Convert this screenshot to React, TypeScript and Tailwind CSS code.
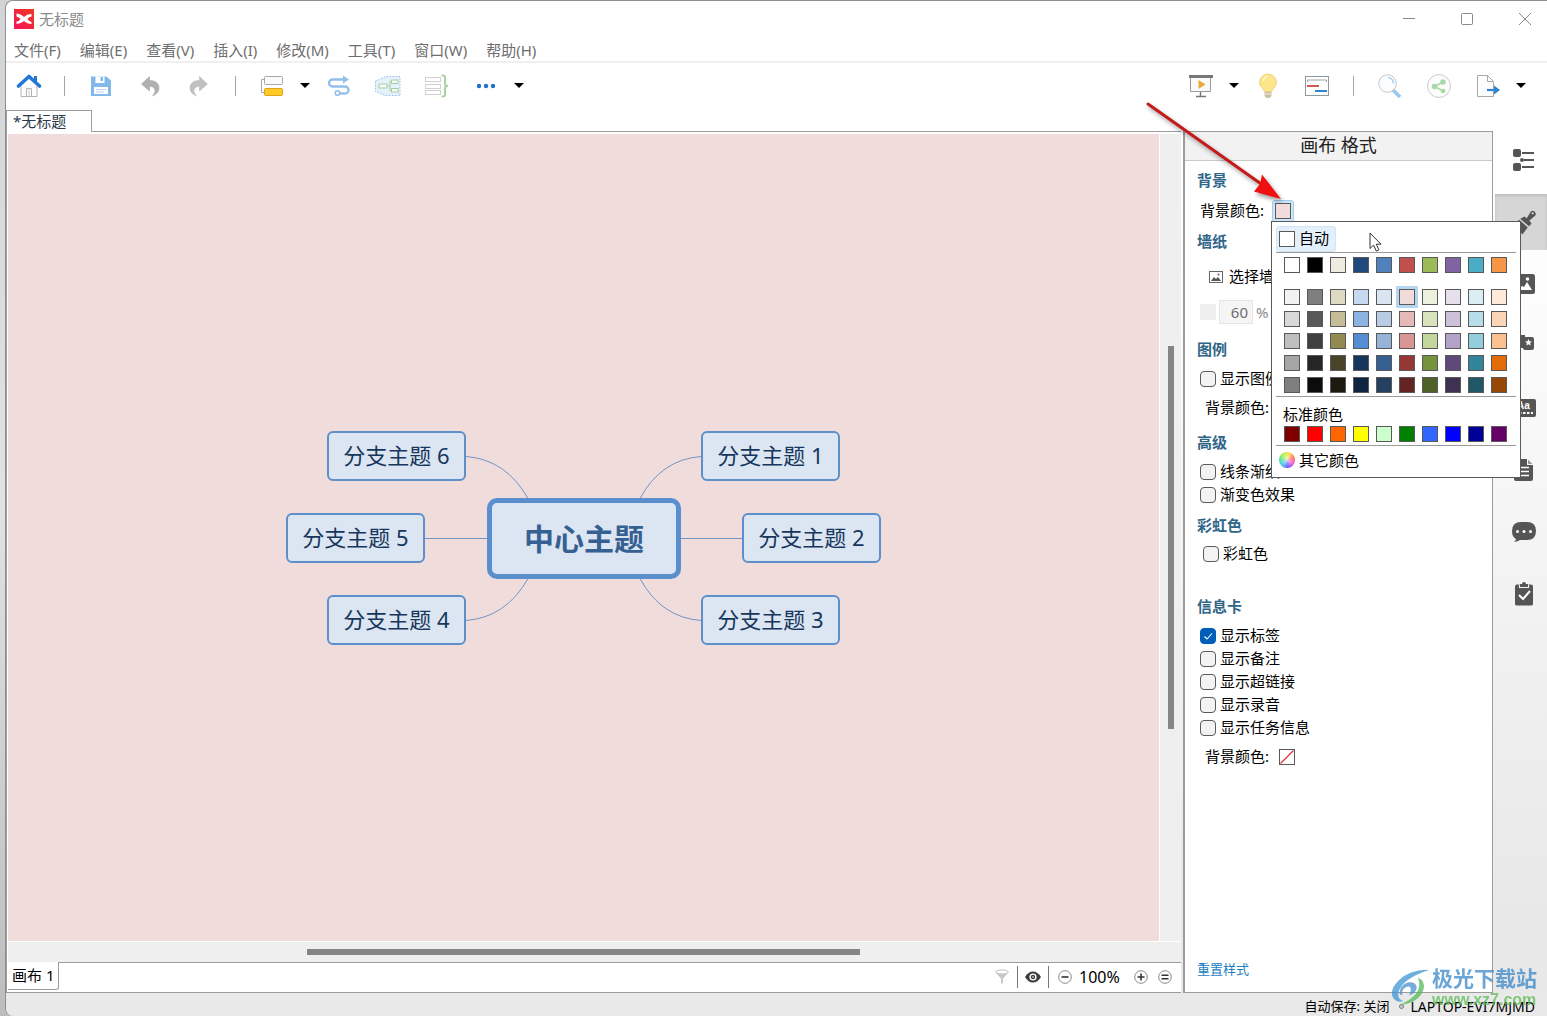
import React, { useState } from 'react';

const FONT = "font-['Noto_Sans','Noto_Sans_CJK_SC',sans-serif]";

const MENUS = ['文件(F)', '编辑(E)', '查看(V)', '插入(I)', '修改(M)', '工具(T)', '窗口(W)', '帮助(H)'];

const BASE_COLORS = ['#ffffff', '#000000', '#eeece1', '#1f497d', '#4f81bd', '#c0504d', '#9bbb59', '#8064a2', '#4bacc6', '#f79646'];

const THEME_COLORS = [
  '#f2f2f2', '#7f7f7f', '#ddd9c3', '#c6d9f0', '#dbe5f1', '#f2dcdb', '#ebf1dd', '#e5e0ec', '#dbeef3', '#fdeada',
  '#d8d8d8', '#595959', '#c4bd97', '#8db3e2', '#b8cce4', '#e5b9b7', '#d7e3bc', '#ccc1d9', '#b7dde8', '#fbd5b5',
  '#bfbfbf', '#3f3f3f', '#938953', '#548dd4', '#95b3d7', '#d99694', '#c3d69b', '#b2a2c7', '#92cddc', '#fac08f',
  '#a5a5a5', '#262626', '#494429', '#17365d', '#366092', '#953734', '#76923c', '#5f497a', '#31859b', '#e36c09',
  '#7f7f7f', '#0c0c0c', '#1d1b10', '#0f243e', '#244061', '#632423', '#4f6128', '#3f3151', '#205867', '#974806',
];

const STANDARD_COLORS = ['#800000', '#ff0000', '#ff6600', '#ffff00', '#ccffcc', '#008000', '#3366ff', '#0000ff', '#000099', '#660066'];

const BRANCHES = [
  { name: '分支主题 6', place: 'left-[41px] top-0' },
  { name: '分支主题 5', place: 'left-0 top-[82px]' },
  { name: '分支主题 4', place: 'left-[41px] top-[164px]' },
  { name: '分支主题 1', place: 'left-[415px] top-0' },
  { name: '分支主题 2', place: 'left-[456px] top-[82px]' },
  { name: '分支主题 3', place: 'left-[415px] top-[164px]' },
];

/* Toolbar icons */
function HomeIcon() {
  return (
    <svg width="26" height="24" viewBox="0 0 26 24" fill="none">
      <path d="M5 12v10.500h16V12" fill="#fdfdfd" stroke="#b4b4b4" />
      <path d="M10.500 22.500v-8h5v8" stroke="#b4b4b4" />
      <path d="M13 14.500v8" stroke="#d0d0d0" />
      <path d="M18 2h3v6h-3z" fill="#2377d4" />
      <path d="M2.500 12 13 2.500 23.500 12" stroke="#2377d4" strokeWidth="3.600" strokeLinecap="round" strokeLinejoin="round" />
    </svg>
  );
}

function SaveIcon() {
  return (
    <svg width="22" height="22" viewBox="0 0 22 22">
      <path d="M1 1.500h15.500l4.500 4V21H1z" fill="#83b9ea" />
      <path d="M5.500 1.500h9V8h-9z" fill="#fff" />
      <path d="M10.500 2h2.500v4h-2.500z" fill="#83b9ea" />
      <path d="M4 12h14v7H4z" fill="#fff" />
      <path d="M6 14.500h10M6 17h8" stroke="#b9d3ea" />
    </svg>
  );
}

function UndoIcon({ flip }: { flip?: boolean }) {
  return (
    <svg width="20" height="22" viewBox="0 0 20 22" className={flip ? '-scale-x-100' : ''}>
      <path
        d="M9.500 1.500 1.500 9l8 7v-4.500c4 0 5.500 2 5.500 4.500 0 1.500-1 3-2.500 5 4-1.500 6.500-4.500 6.500-8 0-5-3.500-7.500-9.500-7.500z"
        fill={flip ? '#c0c0c0' : '#b0b0b0'}
        stroke={flip ? '#b5b5b5' : '#a0a0a0'}
        strokeWidth="0.500"
      />
    </svg>
  );
}

function TopicIcon() {
  return (
    <svg width="24" height="22" viewBox="0 0 24 22" fill="none">
      <path d="M4 4.500H1.500v13H4" stroke="#a8a8a8" />
      <rect x="4.500" y="1.500" width="18" height="8" rx="1" fill="#fafafa" stroke="#a8a8a8" />
      <rect x="4.500" y="13.500" width="18" height="7" rx="1" fill="#ffc928" stroke="#dba51c" />
    </svg>
  );
}

function RelationIcon() {
  return (
    <svg width="24" height="22" viewBox="0 0 24 22" fill="none">
      <path
        d="M17 4.500H5.500a3.500 3.500 0 0 0 0 7h12.500a3.500 3.500 0 0 1 0 7H13"
        stroke="#93c0ea"
        strokeWidth="2.400"
        strokeLinecap="round"
      />
      <path d="M16 0.500 22 4.500 16 8.500z" fill="#93c0ea" />
      <circle cx="10.500" cy="18" r="2.300" stroke="#93c0ea" strokeWidth="1.600" />
    </svg>
  );
}

function BoundaryIcon() {
  return (
    <svg width="26" height="22" viewBox="0 0 26 22" fill="none">
      <path d="M.500 6 11 1.500h14v19H10L.500 16.500z" fill="#e6f2fb" stroke="#8fbfe8" strokeDasharray="1.500 1.500" />
      <path d="M12 11h3M15 6v10M15 6.500h2M15 15.500h2" stroke="#a5cfa0" />
      <rect x="4" y="9" width="8" height="4" fill="#f7fbf7" stroke="#a5cfa0" />
      <rect x="16.500" y="5" width="6.500" height="3.500" fill="#f7fbf7" stroke="#a5cfa0" />
      <rect x="16.500" y="13.500" width="6.500" height="3.500" fill="#f7fbf7" stroke="#a5cfa0" />
    </svg>
  );
}

function SummaryIcon() {
  return (
    <svg width="26" height="24" viewBox="0 0 26 24" fill="none">
      <rect x="1.500" y="3.500" width="15" height="4" stroke="#d0d0d0" />
      <rect x="1.500" y="10.500" width="15" height="4" stroke="#d0d0d0" />
      <rect x="1.500" y="16.500" width="15" height="4" stroke="#d0d0d0" />
      <path d="M17.500 1.500h1.500q2 0 2 2V10q0 2 3 2-3 0-3 2v6.500q0 2-2 2h-1.500" stroke="#a9d3a0" strokeWidth="2" />
    </svg>
  );
}

function DotsIcon() {
  return (
    <svg width="20" height="6" viewBox="0 0 20 6" fill="#2271c8">
      <circle cx="3" cy="3" r="2.200" />
      <circle cx="10" cy="3" r="2.200" />
      <circle cx="17" cy="3" r="2.200" />
    </svg>
  );
}

function PresentIcon() {
  return (
    <svg width="26" height="24" viewBox="0 0 26 24" fill="none">
      <path d="M2.500 3.500h20v14h-20z" fill="#fafafa" stroke="#9a9a9a" />
      <path d="M1 1h24v3H1z" fill="#777" />
      <path d="M12.500 18v4M8 22.500h10" stroke="#777" strokeWidth="1.400" />
      <path d="M10.500 6 17.500 10.500 10.500 15z" fill="#eca93a" />
    </svg>
  );
}

function BulbIcon() {
  return (
    <svg width="20" height="26" viewBox="0 0 20 26" fill="none">
      <path
        d="M10 1a8.500 8.500 0 0 0-8.500 8.500c0 4 4 5.500 4.700 9h7.600c.700-3.500 4.700-5 4.700-9A8.500 8.500 0 0 0 10 1z"
        fill="#fde58a"
        stroke="#f1d27a"
      />
      <path d="M5 8q1-4 4.500-5" stroke="#fff6d2" strokeWidth="1.500" />
      <path d="M6.500 19h7v4l-2 2h-3l-2-2z" fill="#c9c0a8" />
      <path d="M6.500 21h7" stroke="#f6f1e0" />
    </svg>
  );
}

function GanttIcon() {
  return (
    <svg width="26" height="22" viewBox="0 0 26 22" fill="none">
      <rect x="1.500" y="1.500" width="23" height="19" stroke="#8e9aa3" />
      <path d="M3.500 7V5h19v2" stroke="#a0a0a0" />
      <path d="M3 11h12" stroke="#cc5d50" strokeWidth="2" />
      <path d="M11 16h12" stroke="#2f85cf" strokeWidth="2" />
    </svg>
  );
}

function SearchIcon() {
  return (
    <svg width="26" height="26" viewBox="0 0 26 26" fill="none">
      <path d="m16 17 7 7" stroke="#9cc5ec" strokeWidth="3.600" />
      <circle cx="10.500" cy="10.500" r="8.800" fill="#fcfdfe" stroke="#c2c6ca" />
      <path d="M11 4.500q5 .500 5.500 6" stroke="#a9cff0" strokeWidth="1.500" />
    </svg>
  );
}

function ShareIcon() {
  return (
    <svg width="26" height="26" viewBox="0 0 26 26" fill="none">
      <circle cx="13" cy="13" r="11.500" fill="#fcfcfc" stroke="#cdcdcd" />
      <path d="M17 9 8.500 13.500 17 18" stroke="#a8d8a8" strokeWidth="1.500" />
      <circle cx="17" cy="9" r="2.700" fill="#a8d8a8" />
      <circle cx="8.500" cy="13.500" r="2.700" fill="#a8d8a8" />
      <circle cx="17" cy="18" r="2.300" fill="#a8d8a8" />
    </svg>
  );
}

function ExportIcon() {
  return (
    <svg width="26" height="24" viewBox="0 0 26 24" fill="none">
      <path d="M2.500 1.500h10l6 6v15h-16z" fill="#fdfdfd" stroke="#a8a8a8" />
      <path d="M12.500 1.500v6h6" stroke="#a8a8a8" />
      <path d="M12 16h8" stroke="#2f85cf" strokeWidth="2.200" />
      <path d="m19 11.500 6 4.500-6 4.500z" fill="#2f85cf" />
    </svg>
  );
}

function Tool({ label, children, className = 'w-[49px]' }: { label: string; children: React.ReactNode; className?: string }) {
  return (
    <button aria-label={label} className={`flex h-8 items-center justify-center ${className}`}>
      {children}
    </button>
  );
}

function Caret() {
  return (
    <button aria-label="展开" className="flex h-8 w-[18px] items-center justify-center">
      <svg width="10" height="5" viewBox="0 0 10 5">
        <path d="M0 0h10L5 5z" fill="#000" />
      </svg>
    </button>
  );
}

function Divider() {
  return (
    <div className="flex w-6 justify-center">
      <div className="h-5 w-px bg-[#a5a5a5]" />
    </div>
  );
}

/* Sidebar icons */
const SIDE_ICONS: { label: string; icon: React.ReactNode }[] = [
  {
    label: '大纲',
    icon: (
      <svg width="22" height="22" viewBox="0 0 22 22" fill="#555">
        <rect x="0" y="0" width="8" height="8" rx="2" />
        <rect x="0" y="14" width="8" height="8" rx="2" />
        <circle cx="9" cy="11" r="2" />
        <path d="M9 3h12v2H9zM11 10h10v2H11zM9 17h12v2H9z" />
      </svg>
    ),
  },
  {
    label: '格式',
    icon: (
      <svg width="26" height="26" viewBox="0 0 24 24" fill="#555">
        <path d="m12.500 7 2 1.500 4-6.500a3 3 0 0 1 4 4L17 10.500l2 3-2.500 2.500L8.500 9z" />
        <path d="m7.500 10 8 7-5 6.500-2-2.500-1 1.500-2-3-1.500 1L.500 16.500z" />
        <circle cx="20" cy="4" r="1" fill="#d5d5d5" />
      </svg>
    ),
  },
  {
    label: '图片',
    icon: (
      <svg width="22" height="20" viewBox="0 0 22 20">
        <rect width="22" height="20" rx="2.500" fill="#555" />
        <path d="m4 16 5-4 2 1 3-5 5 8z" fill="#fff" />
        <circle cx="14.500" cy="5" r="1.800" fill="#fff" />
      </svg>
    ),
  },
  {
    label: '图标',
    icon: (
      <svg width="22" height="18" viewBox="0 0 22 18" className="-mt-1">
        <path d="M2 0h10v2h7q2 0 2 2v9q0 2-2 2h-7q-2 0-2-2H2q-2 0-2-2V2q0-2 2-2z" fill="#555" />
        <path d="m15.500 4 1 2.300 2.500.200-1.900 1.600.600 2.400-2.200-1.300-2.200 1.300.600-2.400L12 6.500l2.500-.200z" fill="#fff" />
      </svg>
    ),
  },
  {
    label: '字体',
    icon: (
      <svg width="24" height="18" viewBox="0 0 24 18">
        <rect width="24" height="18" rx="2" fill="#555" />
        <text x="5" y="10" fontSize="10" fontWeight="700" fontFamily="Liberation Sans, sans-serif" fill="#fff">
          Aa
        </text>
        <path d="M3 14h18" stroke="#fff" strokeWidth="2" strokeDasharray="2.500 1.500" />
      </svg>
    ),
  },
  {
    label: '备注',
    icon: (
      <svg width="20" height="22" viewBox="0 0 20 22">
        <path d="M2 0h11v6h6v14q0 2-2 2H2q-2 0-2-2V2q0-2 2-2z" fill="#555" />
        <path d="M14 0.500 18.500 5H14z" fill="#999" />
        <path d="M4 8.500h11M4 12.500h11M4 16.500h11" stroke="#fff" strokeWidth="1.300" />
      </svg>
    ),
  },
  {
    label: '评论',
    icon: (
      <svg width="24" height="20" viewBox="0 0 24 20">
        <path d="M9 0h6q9 0 9 9t-9 9H8q-2 1.500-6 2 2-1.500 2-3-4-2-4-8 0-9 9-9z" fill="#555" />
        <g fill="#fff">
          <circle cx="5.500" cy="9.500" r="1.500" />
          <circle cx="12" cy="9.500" r="1.500" />
          <circle cx="18.500" cy="9.500" r="1.500" />
        </g>
      </svg>
    ),
  },
  {
    label: '任务',
    icon: (
      <svg width="18" height="24" viewBox="0 0 18 24">
        <path d="M2 2.500h14q2 0 2 2V22q0 1.500-2 1.500H2Q0 23.500 0 22V4.500q0-2 2-2z" fill="#555" />
        <path d="M4.500 2.500v3h9v-3" fill="none" stroke="#f2f2f2" strokeWidth="1.200" />
        <path d="M5 2h2q0-2 2-2t2 2h2v2.500H5z" fill="#555" />
        <path d="m4 13 4 4 7-8" fill="none" stroke="#fff" strokeWidth="2" />
      </svg>
    ),
  },
];

function Swatch({ color, selected }: { color: string; selected?: boolean }) {
  return (
    <button
      aria-label={color}
      className={`h-4 w-4 border border-[#595959] ${selected ? 'outline-3 outline-[#b5d6f0]' : ''}`}
      style={{ backgroundColor: color }}
    />
  );
}

function Check({ id, label, defaultChecked }: { id: string; label: string; defaultChecked?: boolean }) {
  return (
    <div className="flex h-[23px] items-center gap-1">
      <span className="relative flex h-4 w-4">
        <input
          id={id}
          type="checkbox"
          defaultChecked={defaultChecked}
          className="peer h-4 w-4 appearance-none rounded-[4px] border border-[#5a5a5a] bg-[#f3f3f3] checked:border-[#005fb8] checked:bg-[#005fb8]"
        />
        <svg viewBox="0 0 16 16" className="pointer-events-none absolute inset-0 hidden peer-checked:block">
          <path d="m4.500 8.500 2.500 2.500 5-5.500" fill="none" stroke="#fff" strokeWidth="1.100" />
        </svg>
      </span>
      <label htmlFor={id} className="whitespace-nowrap">{label}</label>
    </div>
  );
}

function Heading({ children, className = '' }: { children: React.ReactNode; className?: string }) {
  return <h2 className={`pl-3 font-bold leading-[23px] text-[#2f6689] ${className}`}>{children}</h2>;
}

function ColorPopup() {
  return (
    <div className="absolute top-[21px] left-[-1px] z-20 w-[250px] border border-[#5a5a5a] bg-white px-1 pt-1 pb-[5px]">
      <button className="flex h-[26px] items-center gap-1 rounded-[3px] border border-[#cfe4f7] bg-[#e3f0fb] pr-[6px] pl-[2px]">
        <span className="h-4 w-4 border border-[#595959] bg-white" />
        自动
      </button>
      <div className="border-t border-[#9a9a9a]" />
      <div className="mt-1 grid grid-cols-[repeat(10,16px)] gap-x-[7px] px-2">
        {BASE_COLORS.map(c => (
          <Swatch key={c} color={c} />
        ))}
      </div>
      <div className="mt-4 grid grid-cols-[repeat(10,16px)] gap-x-[7px] gap-y-[6px] px-2">
        {THEME_COLORS.map((c, i) => (
          <Swatch key={i} color={c} selected={c === '#f2dcdb'} />
        ))}
      </div>
      <div className="mt-[3px] border-t border-[#9a9a9a]" />
      <div className="mt-[5px] pl-[7px] leading-6">标准颜色</div>
      <div className="grid grid-cols-[repeat(10,16px)] gap-x-[7px] px-2">
        {STANDARD_COLORS.map(c => (
          <Swatch key={c} color={c} />
        ))}
      </div>
      <div className="mt-[3px] border-t border-[#9a9a9a]" />
      <button className="mt-[3px] flex h-[23px] items-center gap-1 pl-[3px]">
        <span className="h-4 w-4 rounded-full bg-[radial-gradient(circle,#ffffffaa,transparent_70%),conic-gradient(from_20deg,#ffd84a,#ff6a5a,#f24de0,#5a50f5,#3fc8f0,#50e08a,#b8f040,#ffd84a)]" />
        其它颜色
      </button>

      {/* Mouse pointer */}
      <svg width="14" height="21" viewBox="0 0 14 21" className="pointer-events-none absolute top-[10px] left-[97px]">
        <path d="M1 1v15.500l3.600-3.400 2.700 6 2.600-1.200-2.600-5.700H12z" fill="#fff" stroke="#333" />
      </svg>
    </div>
  );
}

function FormatPanel() {
  const [opacity, setOpacity] = useState('60');

  return (
    <section className="relative mt-[21px] ml-[2px] flex w-[310px] flex-col border border-l-2 border-[#9c9c9c] bg-white text-[15px] text-black">
      <h1 className="h-[29px] border-b border-[#c9c9c9] bg-[#f2f2f2] text-center text-lg leading-[26px] text-[#222]">画布 格式</h1>

      <Heading className="mt-2">背景</Heading>
      <div className="mt-[7px] flex h-[23px] items-center gap-2 pl-[15px]">
        背景颜色:
        <div className="relative">
          <button
            aria-label="背景颜色"
            className="flex h-[22px] w-[22px] items-center justify-center rounded-[3px] border border-[#a3cdee] bg-[#cde6f9]"
          >
            <span className="h-4 w-4 border border-[#595959] bg-[#f2dcdb]" />
          </button>
          <ColorPopup />

          {/* Callout arrow */}
          <svg
            width="150"
            height="112"
            viewBox="0 0 150 112"
            className="pointer-events-none absolute top-[-104px] left-[-132px] z-30 drop-shadow-[2px_3px_2px_#00000066]"
          >
            <path d="M8 8 124 90" stroke="#c41a1a" strokeWidth="3" strokeLinecap="round" />
            <path d="M141 103 114 95.500 120 88 122 78.500z" fill="#f01010" />
          </svg>
        </div>
      </div>

      <Heading className="mt-2">墙纸</Heading>
      <button className="mt-3 flex h-[23px] items-center gap-[6px] self-start pl-6">
        <svg width="14" height="12" viewBox="0 0 14 12" fill="none">
          <rect x=".500" y=".500" width="13" height="11" stroke="#666" />
          <path d="m2 10 3-4 2 2 2-2 3 4z" fill="#555" />
          <circle cx="9.500" cy="3.500" r="1" fill="#555" />
        </svg>
        选择墙纸
      </button>
      <div className="mt-3 flex h-6 items-center pl-[15px] text-[#8a8a8a]">
        <span className="mr-[3px] h-4 w-4 bg-[#efefef]" />
        <input
          aria-label="墙纸透明度"
          value={opacity}
          onChange={e => setOpacity(e.target.value)}
          className="h-6 w-[34px] border border-[#e6e6e6] bg-[#f5f5f5] pr-1 text-right text-[15px] text-[#6d6d6d]"
        />
        <span className="ml-[3px]">%</span>
      </div>

      <Heading className="mt-[14px]">图例</Heading>
      <div className="mt-[6px] pl-[15px]">
        <Check id="legend" label="显示图例" />
      </div>
      <div className="mt-[6px] pl-5 leading-[23px]">背景颜色:</div>

      <Heading className="mt-3">高级</Heading>
      <div className="mt-[6px] pl-[15px]">
        <Check id="tapered" label="线条渐细" />
        <Check id="gradient" label="渐变色效果" />
      </div>

      <Heading className="mt-2">彩虹色</Heading>
      <div className="mt-[5px] pl-[18px]">
        <Check id="rainbow" label="彩虹色" />
      </div>

      <Heading className="mt-[30px]">信息卡</Heading>
      <div className="mt-[6px] pl-[15px]">
        <Check id="tags" label="显示标签" defaultChecked />
        <Check id="notes" label="显示备注" />
        <Check id="links" label="显示超链接" />
        <Check id="audio" label="显示录音" />
        <Check id="tasks" label="显示任务信息" />
      </div>
      <div className="mt-[6px] flex h-[23px] items-center gap-[10px] pl-5">
        背景颜色:
        <button aria-label="无颜色">
          <svg width="16" height="16" viewBox="0 0 16 16" fill="none">
            <rect x=".500" y=".500" width="15" height="15" stroke="#595959" />
            <path d="M1.500 14.500 14.500 1.500" stroke="#e03040" strokeWidth="1.200" />
          </svg>
        </button>
      </div>

      <a href="#reset" className="mt-auto mb-[13px] ml-3 self-start text-[13px] leading-5 text-[#1b81c2]">
        重置样式
      </a>
    </section>
  );
}

function MindMap() {
  return (
    <div className="relative h-[214px] w-[595px] shrink-0">
      <svg width="595" height="214" viewBox="0 0 595 214" fill="none" stroke="#7295c6" className="absolute inset-0">
        <path d="M180 25.500q40 3 62 42M415 25.500q-40 3-61 42" />
        <path d="M180 189.500q40-3 62-42M415 189.500q-40-3-61-42" />
        <path d="M139 107.500h63M394 107.500h63" />
      </svg>
      {BRANCHES.map(b => (
        <div
          key={b.name}
          className={`absolute flex h-[50px] w-[139px] items-center justify-center rounded-md border-2 border-[#5f8fcb] bg-[#dce6f2] text-[22px] text-[#17365d] ${b.place}`}
        >
          {b.name}
        </div>
      ))}
      <div className="absolute top-[67px] left-[201px] flex h-[81px] w-[194px] items-center justify-center rounded-[10px] border-[5px] border-[#5b8ecd] bg-[#dce6f2] text-[30px] font-bold text-[#376092]">
        中心主题
      </div>
    </div>
  );
}

function Round({ d, label }: { d: string; label: string }) {
  return (
    <button aria-label={label} className="flex h-6 w-6 items-center justify-center">
      <svg width="14" height="14" viewBox="0 0 14 14" fill="none">
        <circle cx="7" cy="7" r="6.300" stroke="#8a8a8a" />
        <path d={d} stroke="#333" strokeWidth="1.600" />
      </svg>
    </button>
  );
}

export default function App() {
  return (
    <div className={`flex h-screen min-h-[900px] bg-linear-to-b from-[#d3d4d6] via-[#e2e2e4] to-[#bdbdbd] pl-[5px] ${FONT}`}>
      <div className="relative flex min-w-0 flex-1 flex-col rounded-l-lg border-t border-l border-[#8f8f8f] bg-linear-to-b from-white from-20% to-[#e8e8e8] to-90%">
        {/* Title bar */}
        <header className="flex h-9 items-center rounded-tl-lg bg-white pl-2">
          <svg width="20" height="20" viewBox="0 0 20 20">
            <defs>
              <linearGradient id="logo" x1="0" y1="1" x2="1" y2="0">
                <stop offset="0" stopColor="#f5145a" />
                <stop offset="1" stopColor="#ee3a20" />
              </linearGradient>
            </defs>
            <rect width="20" height="20" fill="url(#logo)" />
            <path
              d="M2.500 4.500q4 0 7.500 3.500 3.500-3.500 7.500-3v2.500q-2.500 0-4 2.500 1.500 2.500 4 3v2q-4.500 0-7.500-3-3.500 3-7.500 3v-2.500q2.500 0 4-2.500-1.500-2-4-2.500z"
              fill="#fff"
            />
          </svg>
          <span className="ml-[5px] text-[15px] text-[#8b8b8b]">无标题</span>
          <div className="ml-auto flex gap-[14px] text-[#8a8a8a]">
            <button aria-label="最小化" className="flex h-9 w-11 items-center justify-center">
              <svg width="14" height="14" viewBox="0 0 14 14"><path d="M1 6.500h12" stroke="currentColor" /></svg>
            </button>
            <button aria-label="最大化" className="flex h-9 w-11 items-center justify-center">
              <svg width="14" height="14" viewBox="0 0 14 14"><rect x="1.500" y="1.500" width="11" height="11" rx="1" fill="none" stroke="currentColor" /></svg>
            </button>
            <button aria-label="关闭" className="flex h-9 w-11 items-center justify-center">
              <svg width="14" height="14" viewBox="0 0 14 14"><path d="m1 1 12 12M13 1 1 13" stroke="currentColor" /></svg>
            </button>
          </div>
        </header>

        {/* Menu */}
        <nav className="flex h-[26px] items-center gap-[19px] border-b-2 border-[#f0f0f0] bg-white pt-[2px] pl-2 text-[15px] text-[#6e6e6e]">
          {MENUS.map(m => (
            <button key={m} className="whitespace-nowrap">{m}</button>
          ))}
        </nav>

        {/* Toolbar */}
        <div className="flex h-[47px] items-center justify-between bg-white pr-[17px] pb-[2px]">
          <div className="flex items-center">
            <Tool label="主页" className="w-[46px]"><HomeIcon /></Tool>
            <Divider />
            <Tool label="保存"><SaveIcon /></Tool>
            <Tool label="撤销"><UndoIcon /></Tool>
            <Tool label="重做"><UndoIcon flip /></Tool>
            <Divider />
            <Tool label="主题"><TopicIcon /></Tool>
            <Caret />
            <Tool label="联系"><RelationIcon /></Tool>
            <Tool label="外框"><BoundaryIcon /></Tool>
            <Tool label="概要"><SummaryIcon /></Tool>
            <Tool label="更多"><DotsIcon /></Tool>
            <Caret />
          </div>
          <div className="flex items-center">
            <Tool label="演示"><PresentIcon /></Tool>
            <Caret />
            <Tool label="头脑风暴"><BulbIcon /></Tool>
            <Tool label="甘特图"><GanttIcon /></Tool>
            <Divider />
            <Tool label="搜索"><SearchIcon /></Tool>
            <Tool label="分享"><ShareIcon /></Tool>
            <Tool label="导出"><ExportIcon /></Tool>
            <Caret />
          </div>
        </div>

        <div className="flex min-h-0 flex-1">
          {/* Editor */}
          <main className="flex min-w-0 flex-1 flex-col">
            <div className="flex h-[22px] shrink-0 bg-white">
              <button className="w-[86px] border-t border-r border-l border-[#9c9c9c] bg-white pb-[2px] pl-[6px] text-left text-[15px] leading-[18px] text-[#2b3a4a]">
                *无标题
              </button>
              <div className="flex-1 border-b border-[#9c9c9c]" />
            </div>
            <div className="flex min-h-0 flex-1 flex-col border-b border-l border-[#9c9c9c] bg-white pl-px">
              <div className="flex min-h-0 flex-1 pt-[2px]">
                <div className="flex min-w-0 flex-1 items-center justify-center overflow-hidden bg-[#f0dcdb]">
                  <MindMap />
                </div>
                <div className="ml-px flex w-[21px] items-center justify-center bg-[#efefef]">
                  <div className="h-[47.500%] w-[6px] bg-[#858585]" />
                </div>
              </div>
              <div className="mt-px flex h-5 items-center bg-[#efefef] pr-[22px]">
                <div className="mx-auto h-[6px] w-[48%] bg-[#858585]" />
              </div>
              <div className="flex h-[30px] shrink-0 items-start">
                <button className="h-7 rounded-br-[3px] border-r border-b border-[#9c9c9c] px-1 text-[15px] whitespace-nowrap text-black">
                  画布 1
                </button>
                <div className="flex h-full flex-1 items-center justify-end border-t border-[#9c9c9c] pr-1 pb-[2px]">
                  <button aria-label="筛选" className="mr-2">
                    <svg width="14" height="16" viewBox="0 0 14 16" fill="none">
                      <ellipse cx="7" cy="3" rx="6.300" ry="2" stroke="#bdbdbd" />
                      <path d="M.700 3.500 6 9.500v5.500l2-1.500v-4l5.300-6Q7 7 .700 3.500z" fill="#c6c6c6" />
                    </svg>
                  </button>
                  <div className="h-[22px] w-px bg-[#777]" />
                  <button aria-label="显示" className="mx-[7px]">
                    <svg width="16" height="12" viewBox="0 0 16 12">
                      <path d="M0 6q3.500-5.500 8-5.500T16 6q-3.500 5.500-8 5.500T0 6z" fill="#3b3b3b" />
                      <circle cx="8" cy="6" r="3.600" fill="#fff" />
                      <circle cx="8" cy="6" r="2.200" fill="#3b3b3b" />
                      <circle cx="8" cy="6" r=".800" fill="#fff" />
                    </svg>
                  </button>
                  <div className="mr-1 h-[22px] w-px bg-[#777]" />
                  <Round label="缩小" d="M3.500 7h7" />
                  <span className="mx-[2px] w-12 text-base text-black">100%</span>
                  <Round label="放大" d="M3.500 7h7M7 3.500v7" />
                  <Round label="适应" d="M3.500 5.200h7M3.500 8.800h7" />
                </div>
              </div>
            </div>
          </main>

          <FormatPanel />

          {/* Sidebar */}
          <aside className="mt-[22px] ml-[2px] flex w-[52px] shrink-0 flex-col gap-[6px]">
            {SIDE_ICONS.map(s => (
              <button
                key={s.label}
                aria-label={s.label}
                className={`flex h-14 items-center justify-center pl-[6px] ${
                  s.label === '格式' ? 'bg-[#d6d6d6] shadow-[inset_0_2px_3px_#bdbdbd]' : ''
                }`}
              >
                {s.icon}
              </button>
            ))}
          </aside>
        </div>

        {/* Status bar */}
        <footer className="flex h-[23px] shrink-0 items-center justify-end rounded-bl-lg bg-[#e9e9e9] pt-1 pr-3 text-[13px] text-black">
          <span>自动保存: 关闭</span>
          <span className="mr-[6px] ml-[10px] h-[5px] w-[5px] rounded-full border border-[#777] bg-[#ccc]" />
          <span className="text-sm">LAPTOP-EVI7MJMD</span>
        </footer>

        {/* Site mark over the corner */}
        <div className="pointer-events-none absolute right-[10px] bottom-[6px] flex items-center opacity-75">
          <svg width="42" height="40" viewBox="0 0 44 42">
            <path d="M41 2Q22 1 9 13-1 23 3 31q4 6 11 4-7-3-5-10Q13 11 41 2z" fill="#3f95d2" />
            <path d="M10 27q0-9 9-12 8-1 9 5 0 6-8 9 3-6 1-9-3-2-7 2-2 3-1 6-2 1-3-1z" fill="#4a92cc" />
            <path d="M29 10q9 4 6 13-5 14-26 16 13-5 19-13 5-8 1-16z" fill="#54b95a" />
          </svg>
          <div>
            <div className="text-[21px] leading-6 font-bold text-[#3a87c8]">极光下载站</div>
            <div className="font-['Liberation_Sans',sans-serif] text-base leading-5 font-bold text-[#5dbb55]">www.xz7.com</div>
          </div>
        </div>
      </div>
    </div>
  );
}
